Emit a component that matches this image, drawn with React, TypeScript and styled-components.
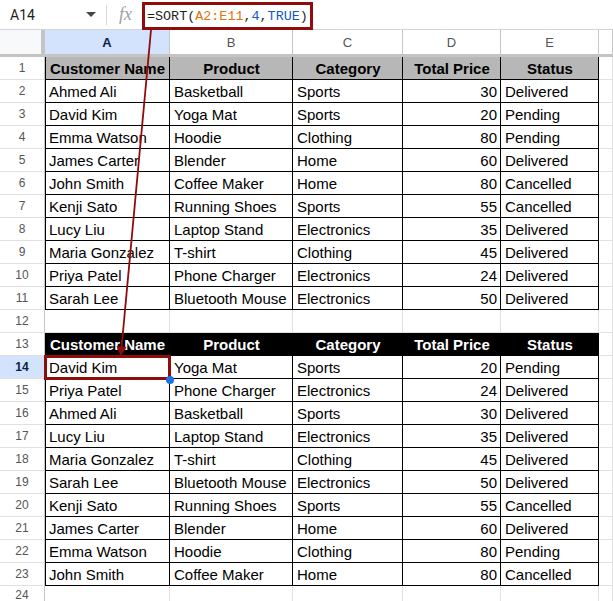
import React from "react";
import styled, { createGlobalStyle, css } from "styled-components";

const GlobalStyle = createGlobalStyle`
  html, body { margin: 0; padding: 0; background: #ffffff; }
  body { font-family: "Liberation Sans", Arial, sans-serif; overflow: hidden; }
  * { box-sizing: border-box; }
`;

const Page = styled.div`
  position: relative;
  width: 613px;
  height: 601px;
  overflow: hidden;
  background: #fff;
`;

const FormulaBar = styled.div`
  display: flex;
  align-items: center;
  height: 30px;
  border-bottom: 1px solid #d4d4d4;
  background: #fff;
`;

const NameBox = styled.div`
  width: 86px;
  padding-left: 10px;
  font-family: Roboto, "Liberation Sans", sans-serif;
  font-size: 14px;
  color: #1f1f1f;
`;

const Caret = styled.div`
  width: 0;
  height: 0;
  border-left: 5px solid transparent;
  border-right: 5px solid transparent;
  border-top: 5px solid #444746;
  margin-right: 10px;
`;

const Divider = styled.div`
  width: 1px;
  height: 20px;
  background: #d9d9d9;
  margin-right: 12px;
`;

const Fx = styled.div`
  font-family: "Liberation Serif", serif;
  font-style: italic;
  font-size: 18px;
  color: #a0a0a0;
  width: 23px;
`;

const FormulaBox = styled.div`
  align-self: flex-start;
  margin-top: 2px;
  height: 28px;
  border: 3px solid #900b0b;
  padding: 0 2px 0 2px;
  display: flex;
  align-items: center;
  font-family: "Liberation Mono", monospace;
  font-size: 13.4px;
  color: #1f1f1f;
  white-space: pre;
  background: #fff;
  position: relative;
  z-index: 2;
`;

const Tok = styled.span<{ $c: string }>`
  color: ${(p) => p.$c};
`;

const Sheet = styled.div`
  display: grid;
  grid-template-columns: 45px 125px 123px 110px 98px 98px 1fr;
  grid-template-rows: 27px;
  grid-auto-rows: 23px;
`;

const Corner = styled.div`
  background: #f8f9fa;
  border-right: 4px solid #c4c4c4;
  border-bottom: 3px solid #c4c4c4;
`;

const ColHead = styled.div<{ $sel?: boolean }>`
  display: flex;
  align-items: center;
  justify-content: center;
  font-family: "Liberation Sans", Arial, sans-serif;
  font-size: 13px;
  border-right: 1px solid #c7c7c7;
  border-bottom: 3px solid #c4c4c4;
  background: ${(p) => (p.$sel ? "#d3e3fd" : "#ffffff")};
  color: ${(p) => (p.$sel ? "#0b1f4a" : "#555555")};
  font-weight: ${(p) => (p.$sel ? 700 : 400)};
`;

const RowHead = styled.div<{ $sel?: boolean; $last?: boolean }>`
  display: flex;
  align-items: ${(p) => (p.$last ? "flex-start" : "center")};
  padding-top: ${(p) => (p.$last ? "2px" : "0")};
  justify-content: center;
  font-family: "Liberation Sans", Arial, sans-serif;
  font-size: 12px;
  border-right: 1px solid #c7c7c7;
  border-bottom: 1px solid #e0e0e0;
  background: ${(p) => (p.$sel ? "#d3e3fd" : "#ffffff")};
  color: ${(p) => (p.$sel ? "#0b1f4a" : "#555555")};
  font-weight: ${(p) => (p.$sel ? 700 : 400)};
`;

type Kind = "grid" | "data" | "headGray" | "headBlack";

const Cell = styled.div<{ $kind: Kind; $right?: boolean; $first?: boolean; $selected?: boolean }>`
  position: relative;
  display: flex;
  align-items: center;
  padding: 1px 3px 0 4px;
  font-size: 15px;
  white-space: nowrap;
  overflow: visible;
  color: #000;
  border-right: 1px solid #e1e1e1;
  border-bottom: 1px solid #e1e1e1;
  justify-content: ${(p) => (p.$right ? "flex-end" : "flex-start")};
  ${(p) =>
    p.$kind !== "grid" &&
    css`
      border-right-color: #000;
      border-bottom-color: #000;
    `}
  ${(p) =>
    p.$first &&
    p.$kind !== "grid" &&
    css`
      box-shadow: inset 1px 0 0 #000;
    `}
  ${(p) =>
    p.$kind === "headGray" &&
    css`
      background: #b7b7b7;
      font-weight: 700;
      justify-content: center;
    `}
  ${(p) =>
    p.$kind === "headBlack" &&
    css`
      background: #000;
      color: #fff;
      font-weight: 700;
      justify-content: center;
    `}
  ${(p) =>
    p.$selected &&
    css`
      &::after {
        content: "";
        position: absolute;
        left: -1px;
        top: -1px;
        right: -2px;
        bottom: -2px;
        border: 3px solid #900b0b;
        z-index: 3;
      }
      &::before {
        content: "";
        position: absolute;
        right: -5px;
        bottom: -6px;
        width: 8px;
        height: 8px;
        border-radius: 50%;
        background: #1a73e8;
        z-index: 4;
      }
    `}
`;

const ArrowLayer = styled.svg`
  position: absolute;
  left: 0;
  top: 0;
  pointer-events: none;
  z-index: 5;
`;

type Row = [string, string, string, number, string];

const source: Row[] = [
  ["Ahmed Ali", "Basketball", "Sports", 30, "Delivered"],
  ["David Kim", "Yoga Mat", "Sports", 20, "Pending"],
  ["Emma Watson", "Hoodie", "Clothing", 80, "Pending"],
  ["James Carter", "Blender", "Home", 60, "Delivered"],
  ["John Smith", "Coffee Maker", "Home", 80, "Cancelled"],
  ["Kenji Sato", "Running Shoes", "Sports", 55, "Cancelled"],
  ["Lucy Liu", "Laptop Stand", "Electronics", 35, "Delivered"],
  ["Maria Gonzalez", "T-shirt", "Clothing", 45, "Delivered"],
  ["Priya Patel", "Phone Charger", "Electronics", 24, "Delivered"],
  ["Sarah Lee", "Bluetooth Mouse", "Electronics", 50, "Delivered"],
];

const sorted: Row[] = source
  .map((r, i) => ({ r, i }))
  .sort((a, b) => a.r[3] - b.r[3] || a.i - b.i)
  .map((x) => x.r);

const headers = ["Customer Name", "Product", "Category", "Total Price", "Status"];

type SheetRow = { kind: "empty" } | { kind: "head"; style: "headGray" | "headBlack" } | { kind: "data"; row: Row };

const rows: SheetRow[] = [
  { kind: "head", style: "headGray" },
  ...source.map((row) => ({ kind: "data" as const, row })),
  { kind: "empty" },
  { kind: "head", style: "headBlack" },
  ...sorted.map((row) => ({ kind: "data" as const, row })),
  { kind: "empty" },
];

export default function App() {
  return (
    <Page>
      <GlobalStyle />
      <FormulaBar>
        <NameBox>A14</NameBox>
        <Caret />
        <Divider />
        <Fx>fx</Fx>
        <FormulaBox>
          <Tok $c="#1f1f1f">=SORT</Tok>
          <Tok $c="#1f1f1f">(</Tok>
          <Tok $c="#e8710a">A2:E11</Tok>
          <Tok $c="#1f1f1f">,</Tok>
          <Tok $c="#1155cc">4</Tok>
          <Tok $c="#1f1f1f">,</Tok>
          <Tok $c="#1155cc">TRUE</Tok>
          <Tok $c="#1f1f1f">)</Tok>
        </FormulaBox>
      </FormulaBar>
      <Sheet>
        <Corner />
        {["A", "B", "C", "D", "E", ""].map((c, i) => (
          <ColHead key={i} $sel={c === "A"}>
            {c}
          </ColHead>
        ))}
        {rows.map((r, ri) => {
          const n = ri + 1;
          const cells: React.ReactNode[] = [];
          if (r.kind === "empty") {
            for (let c = 0; c < 6; c++) cells.push(<Cell key={c} $kind="grid" />);
          } else if (r.kind === "head") {
            headers.forEach((h, c) =>
              cells.push(
                <Cell key={c} $kind={r.style} $first={c === 0}>
                  {h}
                </Cell>
              )
            );
            cells.push(<Cell key={5} $kind="grid" />);
          } else {
            r.row.forEach((v, c) =>
              cells.push(
                <Cell key={c} $kind="data" $first={c === 0} $right={c === 3} $selected={n === 14 && c === 0}>
                  {v}
                </Cell>
              )
            );
            cells.push(<Cell key={5} $kind="grid" />);
          }
          return (
            <React.Fragment key={ri}>
              <RowHead $sel={n === 14} $last={ri === rows.length - 1}>
                {n}
              </RowHead>
              {cells}
            </React.Fragment>
          );
        })}
      </Sheet>
      <ArrowLayer width={613} height={601} viewBox="0 0 613 601">
        <line x1={151} y1={30} x2={121.5} y2={348} stroke="#900b0b" strokeWidth={1.8} />
        <polygon points="116.5,346 126.5,347 120.8,356" fill="#900b0b" />
      </ArrowLayer>
    </Page>
  );
}
